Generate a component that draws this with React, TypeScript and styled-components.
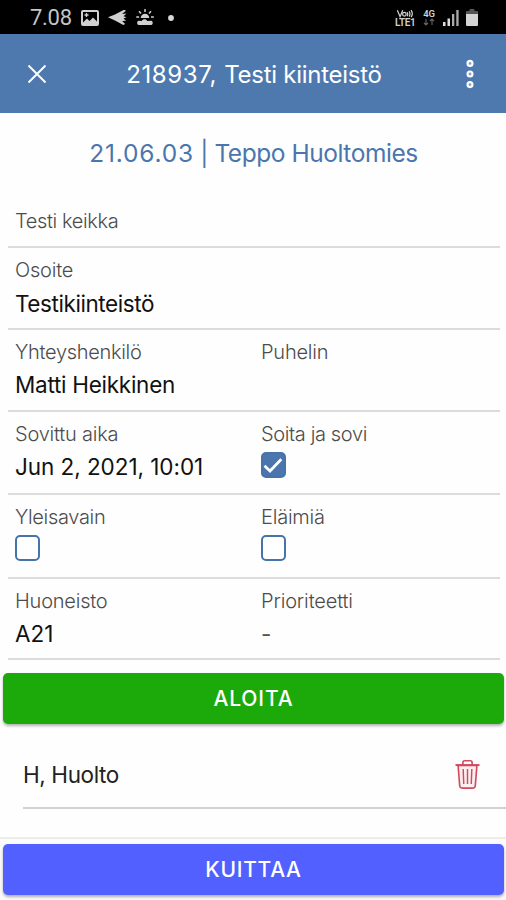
import React from "react";
import styled, { createGlobalStyle } from "styled-components";

const GlobalStyle = createGlobalStyle`
  * { box-sizing: border-box; }
  body { margin: 0; background: #fefefe; font-family: Inter, "Liberation Sans", sans-serif; }
`;

const Screen = styled.div`
  width: 506px;
  height: 900px;
  display: flex;
  flex-direction: column;
  background: #fefefe;
  overflow: hidden;
`;

const StatusBar = styled.div`
  height: 34px;
  flex: none;
  display: flex;
  align-items: center;
  justify-content: space-between;
  padding: 1px 28px 0 30px;
  background: #000;
  color: #d0d0d0;
`;

const StatusGroup = styled.div<{ $gap: number }>`
  display: flex;
  align-items: center;
  gap: ${(p) => p.$gap}px;
`;

const Clock = styled.span`
  font: 400 22px/26px Roboto, sans-serif;
  width: 42px;
  letter-spacing: -0.3px;
  color: #c4c4c4;
`;

const NetLabel = styled.div<{ $size: number }>`
  display: flex;
  flex-direction: column;
  align-items: center;
  font: 600 ${(p) => p.$size}px/9px Roboto, sans-serif;
  letter-spacing: -0.3px;
  white-space: nowrap;
`;

const Header = styled.header`
  height: 79px;
  flex: none;
  display: grid;
  grid-template-columns: 74px 1fr 72px;
  align-items: center;
  background: #4d79ae;
  color: #fff;
`;

const IconButton = styled.button`
  display: flex;
  align-items: center;
  justify-content: center;
  padding: 0;
  border: 0;
  background: none;
`;

const Title = styled.h1`
  margin: 2px 0 0;
  text-align: center;
  font-size: 24px;
  line-height: 30px;
  font-weight: 400;
  white-space: nowrap;
`;

const Tracked = styled.span<{ $track: number }>`
  letter-spacing: ${(p) => p.$track}px;
`;

const Subtitle = styled.h2`
  flex: none;
  margin: 0;
  padding: 25px 0 0 1px;
  height: 86px;
  text-align: center;
  font-size: 24.5px;
  line-height: 30px;
  font-weight: 400;
  color: #4a76ad;
`;

const Row = styled.div<{ $height: number }>`
  flex: none;
  height: ${(p) => p.$height}px;
  margin: 0 6px 0 8px;
  padding-top: 10px;
  display: grid;
  grid-template-columns: 1fr 1fr;
  border-bottom: 2px solid #dcdcdc;
`;

const Field = styled.div`
  padding-left: 7px;
`;

const Label = styled.div<{ $track?: number }>`
  font-size: 20px;
  line-height: 24px;
  font-weight: 300;
  letter-spacing: ${(p) => p.$track ?? -0.22}px;
  color: #4c4c4c;
`;

const Value = styled.div<{ $track?: number; $muted?: boolean; $gap?: number }>`
  margin-top: ${(p) => p.$gap ?? 7}px;
  font-size: 22.5px;
  line-height: 28px;
  letter-spacing: ${(p) => p.$track ?? 0}px;
  color: ${(p) => (p.$muted ? "#555" : "#111")};
`;

const Box = styled.div<{ $checked?: boolean }>`
  width: 25.5px;
  height: 25.5px;
  margin: 6px 0 0 -0.5px;
  display: flex;
  align-items: center;
  justify-content: center;
  border: 2.5px solid #4573aa;
  border-radius: 5px;
  background: ${(p) => (p.$checked ? "#4a76ad" : "#fff")};
`;

const ActionButton = styled.button<{ $color: string; $track: number }>`
  flex: none;
  height: 51px;
  margin: 0 2px 0 3px;
  border: 0;
  border-radius: 5px;
  background: ${(p) => p.$color};
  color: #fff;
  font: 500 21px/26px Inter, sans-serif;
  letter-spacing: ${(p) => p.$track}px;
  box-shadow: 0 2px 3px rgba(0, 0, 0, 0.3);
`;

const Details = styled.section`
  display: flex;
  flex-direction: column;
  padding-bottom: 13px;
`;

const Item = styled.div`
  flex: none;
  height: 85px;
  margin-left: 23px;
  padding: 17px 26px 0 0;
  display: flex;
  align-items: center;
  justify-content: space-between;
  border-bottom: 2px solid #d2d2d2;
`;

const ItemText = styled.span`
  margin-top: 2px;
  font-size: 22.5px;
  line-height: 28px;
  letter-spacing: -0.4px;
  color: #222;
`;

const Footer = styled.footer`
  margin-top: auto;
  height: 63px;
  flex: none;
  display: flex;
  flex-direction: column;
  padding-top: 5px;
  border-top: 2px solid #ececec;
  background: #fbfbfb;
`;

const PictureIcon = () => (
  <svg width="18" height="16" viewBox="0 0 18 16">
    <rect x="1" y="1" width="16" height="14" rx="1" fill="none" stroke="#d0d0d0" strokeWidth="2" />
    <path d="M2 12.5 6 8.5l2.5 2.5L12 7.5l4 4V14H2z" fill="#d0d0d0" />
    <path d="M5.5 3v4M3.5 5h4" stroke="#d0d0d0" strokeWidth="1.3" />
  </svg>
);

const BirdIcon = () => (
  <svg width="19" height="17" viewBox="0 0 19 17">
    <path d="M0 8.2 7 5.5 16 0.8l2 1-4 3.2 4.5-.5-3 2.7 3 1-3 1.3 2.6 2.3-4 .2 3 3-1.8 1L7 11.5z" fill="#d0d0d0" />
  </svg>
);

const WeatherIcon = () => (
  <svg width="18" height="17" viewBox="0 0 18 17">
    <path d="M9 0v3M3 2.2l2 2.2M15 2.2l-2 2.2M0.3 8h2.8M15 8h2.8" stroke="#d0d0d0" strokeWidth="1.5" />
    <path d="M4.7 9a4.3 4.3 0 0 1 8.6 0z" fill="#d0d0d0" />
    <path d="M2.5 16a2.3 2.3 0 0 1 0-4.2l3.3.1c.7-2 4.6-2.2 5.4 0l4.2-.1a2.3 2.3 0 0 1 0 4.2z" fill="#d0d0d0" />
  </svg>
);

const DotIcon = () => (
  <svg width="6" height="6" viewBox="0 0 6 6"><circle cx="3" cy="3" r="2.9" fill="#d8d8d8" /></svg>
);

const VoiceIcon = () => (
  <svg width="18" height="9" viewBox="0 0 20 9" fill="none" stroke="#d0d0d0" strokeWidth="1.4">
    <path d="M1.5 1 4.5 8 7.5 1" />
    <circle cx="9.3" cy="5.3" r="2" />
    <path d="M12.5 3q1 2.2 0 4.5M14.7 2q1.6 3.2 0 6M16.8 .8q2.6 4 0 7.8" />
  </svg>
);

const TransferIcon = () => (
  <svg width="12" height="8" viewBox="0 0 12 8" fill="none" stroke="#666" strokeWidth="1.1">
    <path d="M3 1v6M1 5l2 2 2-2M9 7V1M7 3l2-2 2 2" />
  </svg>
);

const SignalIcon = () => (
  <svg width="16" height="18" viewBox="0 0 16 18">
    <path d="M0 13h2.5v4H0zM4.5 9.5H7V17H4.5z" fill="#ddd" />
    <path d="M9 5h2.3v12H9zM13.3 1h2.3v16h-2.3z" fill="#aaa" />
  </svg>
);

const BatteryIcon = () => (
  <svg width="12" height="17" viewBox="0 0 12 17">
    <path d="M3.5 0h5v2H12v3H0V2h3.5z" fill="#555" />
    <path d="M0 5h12v11a1 1 0 0 1-1 1H1a1 1 0 0 1-1-1z" fill="#d4d4d4" />
  </svg>
);

const CloseIcon = () => (
  <svg width="20" height="20" viewBox="0 0 20 20">
    <path d="M1.5 1.5 18.5 18.5M18.5 1.5 1.5 18.5" stroke="#fff" strokeWidth="1.9" />
  </svg>
);

const MoreIcon = () => (
  <svg width="10" height="30" viewBox="0 0 10 30" fill="#86a5cc" stroke="#fff" strokeWidth="2.1">
    <circle cx="5" cy="4.4" r="2.5" />
    <circle cx="5" cy="15" r="2.5" />
    <circle cx="5" cy="25.6" r="2.5" />
  </svg>
);

const CheckIcon = () => (
  <svg width="20" height="20" viewBox="0 0 20 20">
    <path d="M1.5 10.8 7 16 18.3 4.2" fill="none" stroke="#fff" strokeWidth="2.7" />
  </svg>
);

const TrashIcon = () => (
  <svg width="25" height="31" viewBox="0 0 26 31" fill="none" stroke="#d24a60" strokeWidth="1.7">
    <path d="M3.2 6 4.9 27.2Q5.1 29.6 7.4 29.6H18.6Q20.9 29.6 21.1 27.2L22.8 6z" fill="#fdeef0" />
    <path d="M0.5 5.7H25.5" strokeWidth="2" />
    <path d="M8.2 5.5V3Q8.2 1.2 10 1.2H16Q17.8 1.2 17.8 3V5.5" />
    <path d="M8.5 9.8 9.1 25.4M13 9.8V25.4M17.5 9.8 16.9 25.4" strokeWidth="1.5" />
  </svg>
);

export default function App() {
  return (
    <>
      <GlobalStyle />
      <Screen>
        <StatusBar>
          <StatusGroup $gap={9}>
            <Clock>7.08</Clock>
            <PictureIcon />
            <BirdIcon />
            <WeatherIcon />
            <StatusGroup $gap={0}>&nbsp;<DotIcon /></StatusGroup>
          </StatusGroup>
          <StatusGroup $gap={7.5}>
            <NetLabel $size={10}>
              <VoiceIcon />
              <span>LTE1</span>
            </NetLabel>
            <NetLabel $size={9.5}>
              <span>4G</span>
              <TransferIcon />
            </NetLabel>
            <SignalIcon />
            <BatteryIcon />
          </StatusGroup>
        </StatusBar>
        <Header>
          <IconButton aria-label="Sulje"><CloseIcon /></IconButton>
          <Title>
            <Tracked $track={0.6}>218937, </Tracked>
            <Tracked $track={-0.27}>Testi kiinteistö</Tracked>
          </Title>
          <IconButton aria-label="Valikko"><MoreIcon /></IconButton>
        </Header>
        <Subtitle>
          <Tracked $track={0.8}>21.06.03</Tracked>
          <Tracked $track={-0.45}> | Teppo Huoltomies</Tracked>
        </Subtitle>
        <Details>
          <Row $height={49}>
            <Field><Label $track={-0.38}>Testi keikka</Label></Field>
          </Row>
          <Row $height={82}>
            <Field>
              <Label>Osoite</Label>
              <Value $track={-0.42} $gap={7.5}>Testikiinteistö</Value>
            </Field>
          </Row>
          <Row $height={82}>
            <Field>
              <Label $track={-0.3}>Yhteyshenkilö</Label>
              <Value $track={-0.27}>Matti Heikkinen</Value>
            </Field>
            <Field><Label>Puhelin</Label></Field>
          </Row>
          <Row $height={83}>
            <Field>
              <Label>Sovittu aika</Label>
              <Value $track={-0.05}>Jun 2, 2021, 10:01</Value>
            </Field>
            <Field>
              <Label $track={-0.37}>Soita ja sovi</Label>
              <Box $checked><CheckIcon /></Box>
            </Field>
          </Row>
          <Row $height={84}>
            <Field>
              <Label $track={-0.32}>Yleisavain</Label>
              <Box />
            </Field>
            <Field>
              <Label>Eläimiä</Label>
              <Box />
            </Field>
          </Row>
          <Row $height={81}>
            <Field>
              <Label>Huoneisto</Label>
              <Value>A21</Value>
            </Field>
            <Field>
              <Label $track={-0.15}>Prioriteetti</Label>
              <Value $muted>-</Value>
            </Field>
          </Row>
        </Details>
        <ActionButton $color="#1caa0a" $track={0.9}>ALOITA</ActionButton>
        <Item>
          <ItemText>H, Huolto</ItemText>
          <IconButton aria-label="Poista"><TrashIcon /></IconButton>
        </Item>
        <Footer>
          <ActionButton $color="#5260ff" $track={0.7}>KUITTAA</ActionButton>
        </Footer>
      </Screen>
    </>
  );
}
